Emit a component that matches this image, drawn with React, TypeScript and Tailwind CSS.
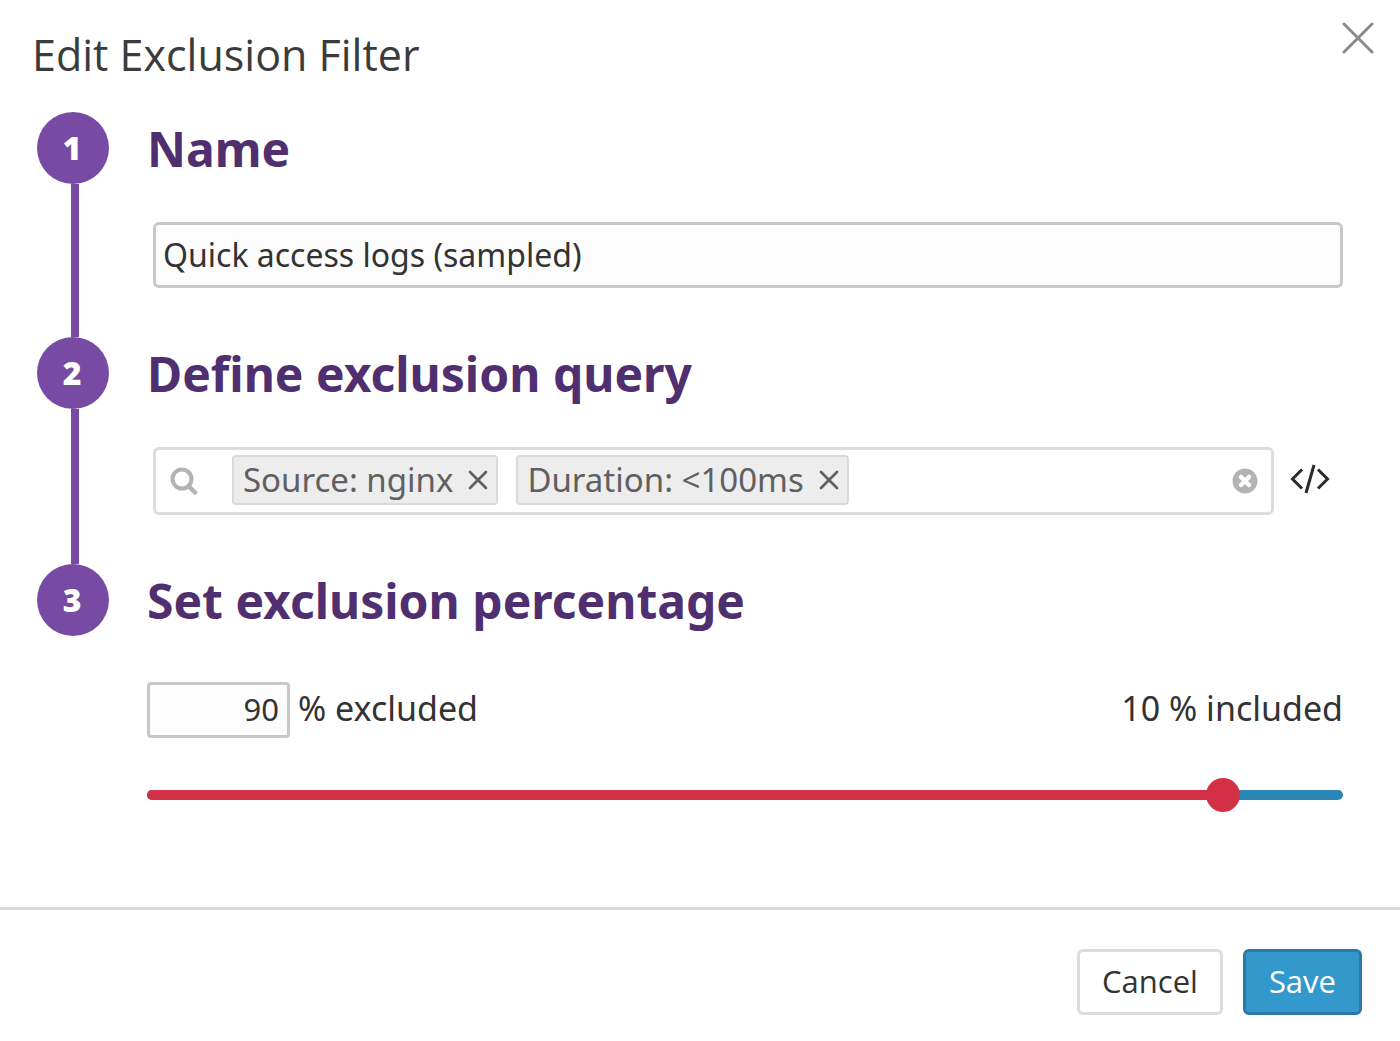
import { useState } from 'react'
import type { ReactNode } from 'react'

const INITIAL_FILTERS = [
  { id: 'source', label: 'Source: nginx' },
  { id: 'duration', label: 'Duration: <100ms' },
]

interface StepProps {
  number: number
  title: string
  last?: boolean
  children: ReactNode
}

function Step({ number, title, last, children }: StepProps) {
  return (
    <li className="flex gap-[38px]">
      <div className="flex w-[72px] shrink-0 flex-col">
        <span className="flex h-[72px] items-center justify-center rounded-full bg-[#774aa4] pr-0.5 font-['Open_Sans',sans-serif] text-[32px] font-extrabold text-white">
          {number}
        </span>
        {!last && <span className="ml-[34px] w-2 flex-1 bg-[#774aa4]" />}
      </div>
      <section className={last ? 'min-w-0 flex-1' : 'min-w-0 flex-1 pb-[49px]'}>
        <h2 className="text-[48px] leading-[74px] font-bold text-[#4f2f6f]">{title}</h2>
        {children}
      </section>
    </li>
  )
}

function CloseIcon() {
  return (
    <svg width="32" height="32" viewBox="0 0 32 32" fill="none" stroke="#8a8a8a" strokeWidth="3" strokeLinecap="round">
      <path d="M2 2l28 28M30 2L2 30" />
    </svg>
  )
}

function SearchIcon() {
  return (
    <svg width="28" height="28" viewBox="0 0 28 28" fill="none" stroke="#b3b3b3" strokeWidth="4" className="shrink-0">
      <circle cx="12" cy="12" r="9.500" />
      <path d="M18.500 19l6.500 6.500" strokeWidth="4.500" strokeLinecap="round" />
    </svg>
  )
}

function ChipRemoveIcon() {
  return (
    <svg width="20" height="20" viewBox="0 0 20 20" fill="none" stroke="#606060" strokeWidth="2.600" strokeLinecap="round">
      <path d="M2 2l16 16M18 2L2 18" />
    </svg>
  )
}

function ClearIcon() {
  return (
    <svg width="26" height="26" viewBox="0 0 26 26">
      <circle cx="13" cy="13" r="12.500" fill="#b3b3b3" />
      <path d="M9 9l8 8M17 9l-8 8" stroke="#fff" strokeWidth="4.500" strokeLinecap="round" />
    </svg>
  )
}

function CodeIcon() {
  return (
    <svg width="40" height="30" viewBox="0 0 40 30" fill="none" stroke="#2b2b2b" strokeWidth="3">
      <path d="M12 5.500L2.500 15l9.500 9.500M28 5.500l9.500 9.500-9.500 9.500M24 1l-8 28" />
    </svg>
  )
}

export default function App() {
  const [name, setName] = useState('Quick access logs (sampled)')
  const [filters, setFilters] = useState(INITIAL_FILTERS)
  const [query, setQuery] = useState('')
  const [excluded, setExcluded] = useState(90)

  const updateExcluded = (value: string) => {
    const next = Number(value)
    if (!Number.isNaN(next)) setExcluded(Math.min(100, Math.max(0, next)))
  }

  const clearQuery = () => {
    setFilters([])
    setQuery('')
  }

  return (
    <div
      role="dialog"
      aria-labelledby="dialog-title"
      className="flex min-h-screen flex-col bg-white font-['Noto_Sans','Open_Sans',sans-serif] text-[#333]"
    >
      <header className="flex items-start justify-between pt-[22px] pr-[26px] pb-[24px] pl-8">
        <h1 id="dialog-title" className="font-['Open_Sans',sans-serif] text-[43px] leading-[66px] text-[#3b3b3b]">
          Edit Exclusion Filter
        </h1>
        <button type="button" aria-label="Close">
          <CloseIcon />
        </button>
      </header>

      <main className="flex-1 pr-[57px] pb-20 pl-[37px]">
        <ol>
          <Step number={1} title="Name">
            <div className="pt-9 pl-[6px]">
              <input
                type="text"
                aria-label="Name"
                value={name}
                onChange={(e) => setName(e.target.value)}
                className="block h-[66px] w-full rounded-md border-[3px] border-[#c8c8c8] bg-[#fcfcfc] px-[7px] pb-0.5 text-[32px] outline-none"
              />
            </div>
          </Step>

          <Step number={2} title="Define exclusion query">
            <div className="flex items-center gap-4 pt-9 pr-[13px] pl-[6px]">
              <div className="flex h-[68px] min-w-0 flex-1 items-center rounded-md border-[3px] border-[#dcdcdc] pr-[13px] pl-[14px]">
                <SearchIcon />
                <ul className="flex gap-[18px] pb-0.5 pl-[34px]">
                  {filters.map((filter) => (
                    <li
                      key={filter.id}
                      className="flex h-[50px] items-center gap-[15px] rounded-sm border-2 border-[#dadada] bg-[#ededed] pr-2 pl-[9px] text-[33px] leading-[44px] whitespace-nowrap text-[#606060]"
                    >
                      {filter.label}
                      <button
                        type="button"
                        aria-label={`Remove ${filter.label}`}
                        onClick={() => setFilters(filters.filter((f) => f.id !== filter.id))}
                      >
                        <ChipRemoveIcon />
                      </button>
                    </li>
                  ))}
                </ul>
                <input
                  type="text"
                  aria-label="Exclusion query"
                  value={query}
                  onChange={(e) => setQuery(e.target.value)}
                  className="min-w-0 flex-1 px-3 text-[32px] outline-none"
                />
                <button type="button" aria-label="Clear query" onClick={clearQuery}>
                  <ClearIcon />
                </button>
              </div>
              <button type="button" aria-label="Edit as code" className="pb-1">
                <CodeIcon />
              </button>
            </div>
          </Step>

          <Step number={3} title="Set exclusion percentage" last>
            <div className="flex items-baseline justify-between pt-11 text-[34px] leading-[48px]">
              <div className="flex items-baseline gap-2">
                <input
                  id="excluded"
                  type="text"
                  inputMode="numeric"
                  value={excluded}
                  onChange={(e) => updateExcluded(e.target.value)}
                  className="h-[56px] w-[143px] rounded-sm border-[3px] border-[#c8c8c8] bg-[#fcfcfc] px-2 pb-0.5 text-right text-[31px] outline-none"
                />
                <label htmlFor="excluded">% excluded</label>
              </div>
              <span>{100 - excluded} % included</span>
            </div>

            <div className="grid items-center pt-[40px]">
              <div className="col-start-1 row-start-1 h-[10px] overflow-hidden rounded-full bg-[#2b87b5]">
                <div className="h-full bg-[#d23045]" style={{ width: `${excluded}%` }} />
              </div>
              {/* Wider than the bar by one thumb, so the thumb's centre sits on the value */}
              <input
                type="range"
                aria-label="Percentage excluded"
                min={0}
                max={100}
                value={excluded}
                onChange={(e) => updateExcluded(e.target.value)}
                className="col-start-1 row-start-1 -mx-[17px] h-[34px] cursor-pointer appearance-none bg-transparent outline-none [&::-webkit-slider-thumb]:size-[34px] [&::-webkit-slider-thumb]:appearance-none [&::-webkit-slider-thumb]:rounded-full [&::-webkit-slider-thumb]:bg-[#d23045]"
              />
            </div>
          </Step>
        </ol>
      </main>

      <footer className="flex justify-end gap-5 border-t-[3px] border-[#dadada] pt-[39px] pr-[38px] pb-[26px] font-['Open_Sans',sans-serif] text-[31px]">
        <button type="button" className="h-[66px] rounded-md border-[3px] border-[#dcdcdc] bg-white px-[22px] pb-0.5">
          Cancel
        </button>
        <button type="button" className="h-[66px] rounded-md border-[3px] border-[#2a7aa8] bg-[#3398cc] px-[23px] pb-0.5 text-white">
          Save
        </button>
      </footer>
    </div>
  )
}
